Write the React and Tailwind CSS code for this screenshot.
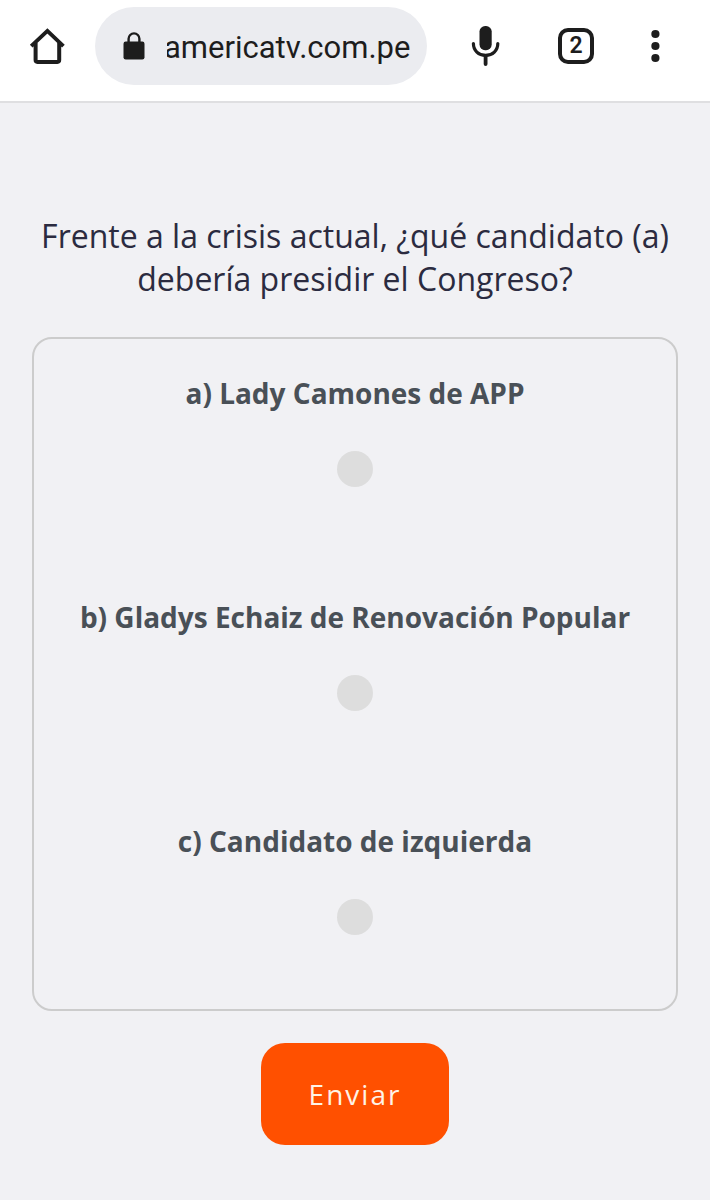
import { useState } from "react";

const options = [
  { id: "a", label: "a) Lady Camones de APP" },
  { id: "b", label: "b) Gladys Echaiz de Renovación Popular" },
  { id: "c", label: "c) Candidato de izquierda" },
];

function HomeIcon() {
  return (
    <svg viewBox="0 0 36 36" className="size-9" fill="none" stroke="#1d1d1d" aria-hidden="true">
      <path d="M6.6 15V32.1a1.8 1.8 0 0 0 1.8 1.8H28.4a1.8 1.8 0 0 0 1.8-1.8V15" strokeWidth="4" strokeLinejoin="round" />
      <path d="M2.2 18.2L18.4 2.9L34.4 18.2" strokeWidth="3.9" strokeLinejoin="miter" />
    </svg>
  );
}

function LockIcon() {
  return (
    <svg viewBox="0 0 22 28" className="h-7 w-[22px] shrink-0" fill="none" aria-hidden="true">
      <rect x="0.5" y="9.5" width="21" height="18" rx="2.2" fill="#1d1d1d" />
      <path d="M5.6 11V6.8a5.4 5.4 0 0 1 10.8 0V11" stroke="#1d1d1d" strokeWidth="2.4" />
    </svg>
  );
}

function MicIcon() {
  return (
    <svg viewBox="0 0 36 42" className="h-[42px] w-9" fill="none" stroke="#1d1d1d" strokeLinecap="round" aria-hidden="true">
      <rect x="12.5" y="1" width="12.2" height="24.2" rx="5.6" fill="#1d1d1d" stroke="none" />
      <path d="M6.4 18.6C6.4 25.5 11.5 30.4 18.6 30.4S30.8 25.5 30.8 18.6" strokeWidth="3.2" />
      <path d="M18.6 31V39" strokeWidth="3.8" />
    </svg>
  );
}

function MoreIcon() {
  return (
    <svg viewBox="0 0 36 36" className="size-9" fill="#1d1d1d" aria-hidden="true">
      <circle cx="18.4" cy="6" r="4.1" />
      <circle cx="18.4" cy="18" r="4.1" />
      <circle cx="18.4" cy="30" r="4.1" />
    </svg>
  );
}

export default function App() {
  const [choice, setChoice] = useState("");

  return (
    <div className="flex min-h-screen flex-col bg-[#f1f1f4] font-['Open_Sans',sans-serif]">
      <header className="flex items-center border-b-2 border-[#dfdfe1] bg-white pt-[7px] pr-[37px] pb-4 pl-[29px]">
        <button type="button" aria-label="Inicio">
          <HomeIcon />
        </button>
        <div className="mr-10 ml-[30px] flex h-[78px] min-w-0 flex-1 items-center gap-[22px] rounded-full bg-[#ebecf0] pr-3 pl-7">
          <LockIcon />
          <input
            type="text"
            aria-label="Dirección web"
            defaultValue="americatv.com.pe"
            className="min-w-0 flex-1 bg-transparent pt-1 -indent-[3px] font-['Roboto',sans-serif] text-[31px] text-[#1d1d1d] outline-none"
          />
        </div>
        <button type="button" aria-label="Búsqueda por voz">
          <MicIcon />
        </button>
        <button
          type="button"
          aria-label="Pestañas abiertas: 2"
          className="ml-[55px] flex size-9 items-center justify-center rounded-[10px] border-4 border-[#1d1d1d] font-['Roboto',sans-serif] text-[23px] font-semibold text-[#1d1d1d]"
        >
          2
        </button>
        <button type="button" aria-label="Más opciones" className="ml-[43px]">
          <MoreIcon />
        </button>
      </header>

      <main className="px-8 pt-[111px] pb-14">
        <form onSubmit={(e) => e.preventDefault()} className="flex flex-col items-center">
          <h1 id="question" className="text-center text-[32px] leading-[43px] text-[#2b2b40]">
            Frente a la crisis actual, ¿qué candidato (a) debería presidir el Congreso?
          </h1>
          <div
            role="radiogroup"
            aria-labelledby="question"
            className="mt-[37px] flex w-full flex-col gap-[108px] rounded-[20px] border-2 border-[#cccccc] pt-8 pb-[74px]"
          >
            {options.map((o) => (
              <label key={o.id} className="flex flex-col items-center gap-9 text-center text-[28px] leading-[44px] font-bold text-[#495057]">
                {o.label}
                <input
                  type="radio"
                  name="candidato"
                  value={o.id}
                  checked={choice === o.id}
                  onChange={() => setChoice(o.id)}
                  className="size-9 appearance-none rounded-full bg-[#dddddd] checked:bg-[#ff5000]"
                />
              </label>
            ))}
          </div>
          <button
            type="submit"
            className="mt-8 rounded-3xl bg-[#ff5000] px-12 py-[30px] text-[28px] leading-[42px] tracking-[2px] text-[#fff3e6]"
          >
            Enviar
          </button>
        </form>
      </main>
    </div>
  );
}
